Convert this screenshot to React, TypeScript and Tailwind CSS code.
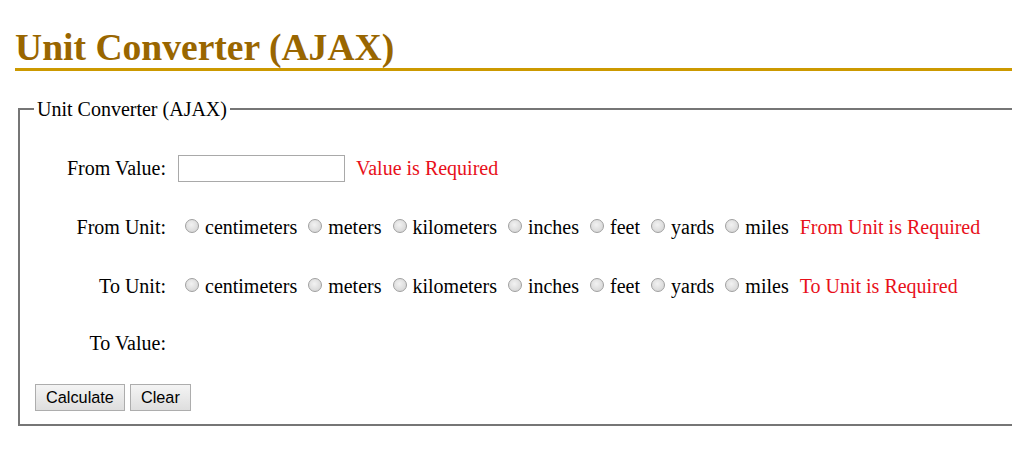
const units = ["centimeters", "meters", "kilometers", "inches", "feet", "yards", "miles"];

function Radio() {
  return (
    <span className="ml-[7px] mr-[6px] mb-[2px] inline-block h-[14px] w-[14px] shrink-0 rounded-full border border-[#a0a0a0] bg-[radial-gradient(circle_at_45%_40%,#f2f2f2,#cfcfcf)]" />
  );
}

function UnitRow({ label, error, h }: { label: string; error: string; h: string }) {
  return (
    <div className={`flex items-center ${h}`}>
      <div className="w-[132px] text-right">{label}</div>
      <div className="ml-[12px] flex items-center">
        {units.map((u, i) => (
          <span key={u} className={i === 0 ? "flex items-center" : "ml-[4px] flex items-center"}>
            <Radio />
            <span>{u}</span>
          </span>
        ))}
        <span className="ml-[11px] text-[#e8101a]">{error}</span>
      </div>
    </div>
  );
}

export default function App() {
  return (
    <div className="h-[459px] w-[1012px] overflow-hidden bg-white font-['Liberation_Serif',serif] text-[20px] text-black">
      <div className="pl-[15px] pt-[28px]">
        <h1 className="w-[1010px] border-b-[3px] border-[#cc9900] text-[37.6px] font-bold leading-[40px] text-[#996600]">
          Unit Converter (AJAX)
        </h1>
      </div>

      <fieldset className="ml-[18px] mt-[27px] w-[1010px] border-2 border-[#767676] pb-[13px] pl-[14px]">
        <legend className="px-[3px] leading-[22px]">Unit Converter (AJAX)</legend>

        <div className="pt-[19px]">
          <div className="flex h-[58px] items-center">
            <div className="w-[132px] text-right">From Value:</div>
            <input
              type="text"
              className="ml-[12px] h-[27px] w-[167px] border border-[#a9a9a9] bg-white px-1 outline-none"
            />
            <span className="ml-[11px] text-[#e8101a]">Value is Required</span>
          </div>

          <UnitRow label="From Unit:" error="From Unit is Required" h="h-[60px]" />
          <UnitRow label="To Unit:" error="To Unit is Required" h="h-[58px]" />

          <div className="flex h-[56px] items-center">
            <div className="w-[132px] text-right">To Value:</div>
          </div>

          <div className="mt-[13px] ml-[1px] flex gap-[5px] font-['Liberation_Sans',Arial,sans-serif] text-[16.3px]">
            <button className="h-[27px] border border-[#adadad] bg-[linear-gradient(#f4f4f4,#dedede)] px-[10px] leading-none">
              Calculate
            </button>
            <button className="h-[27px] border border-[#adadad] bg-[linear-gradient(#f4f4f4,#dedede)] px-[10px] leading-none">
              Clear
            </button>
          </div>
        </div>
      </fieldset>
    </div>
  );
}
